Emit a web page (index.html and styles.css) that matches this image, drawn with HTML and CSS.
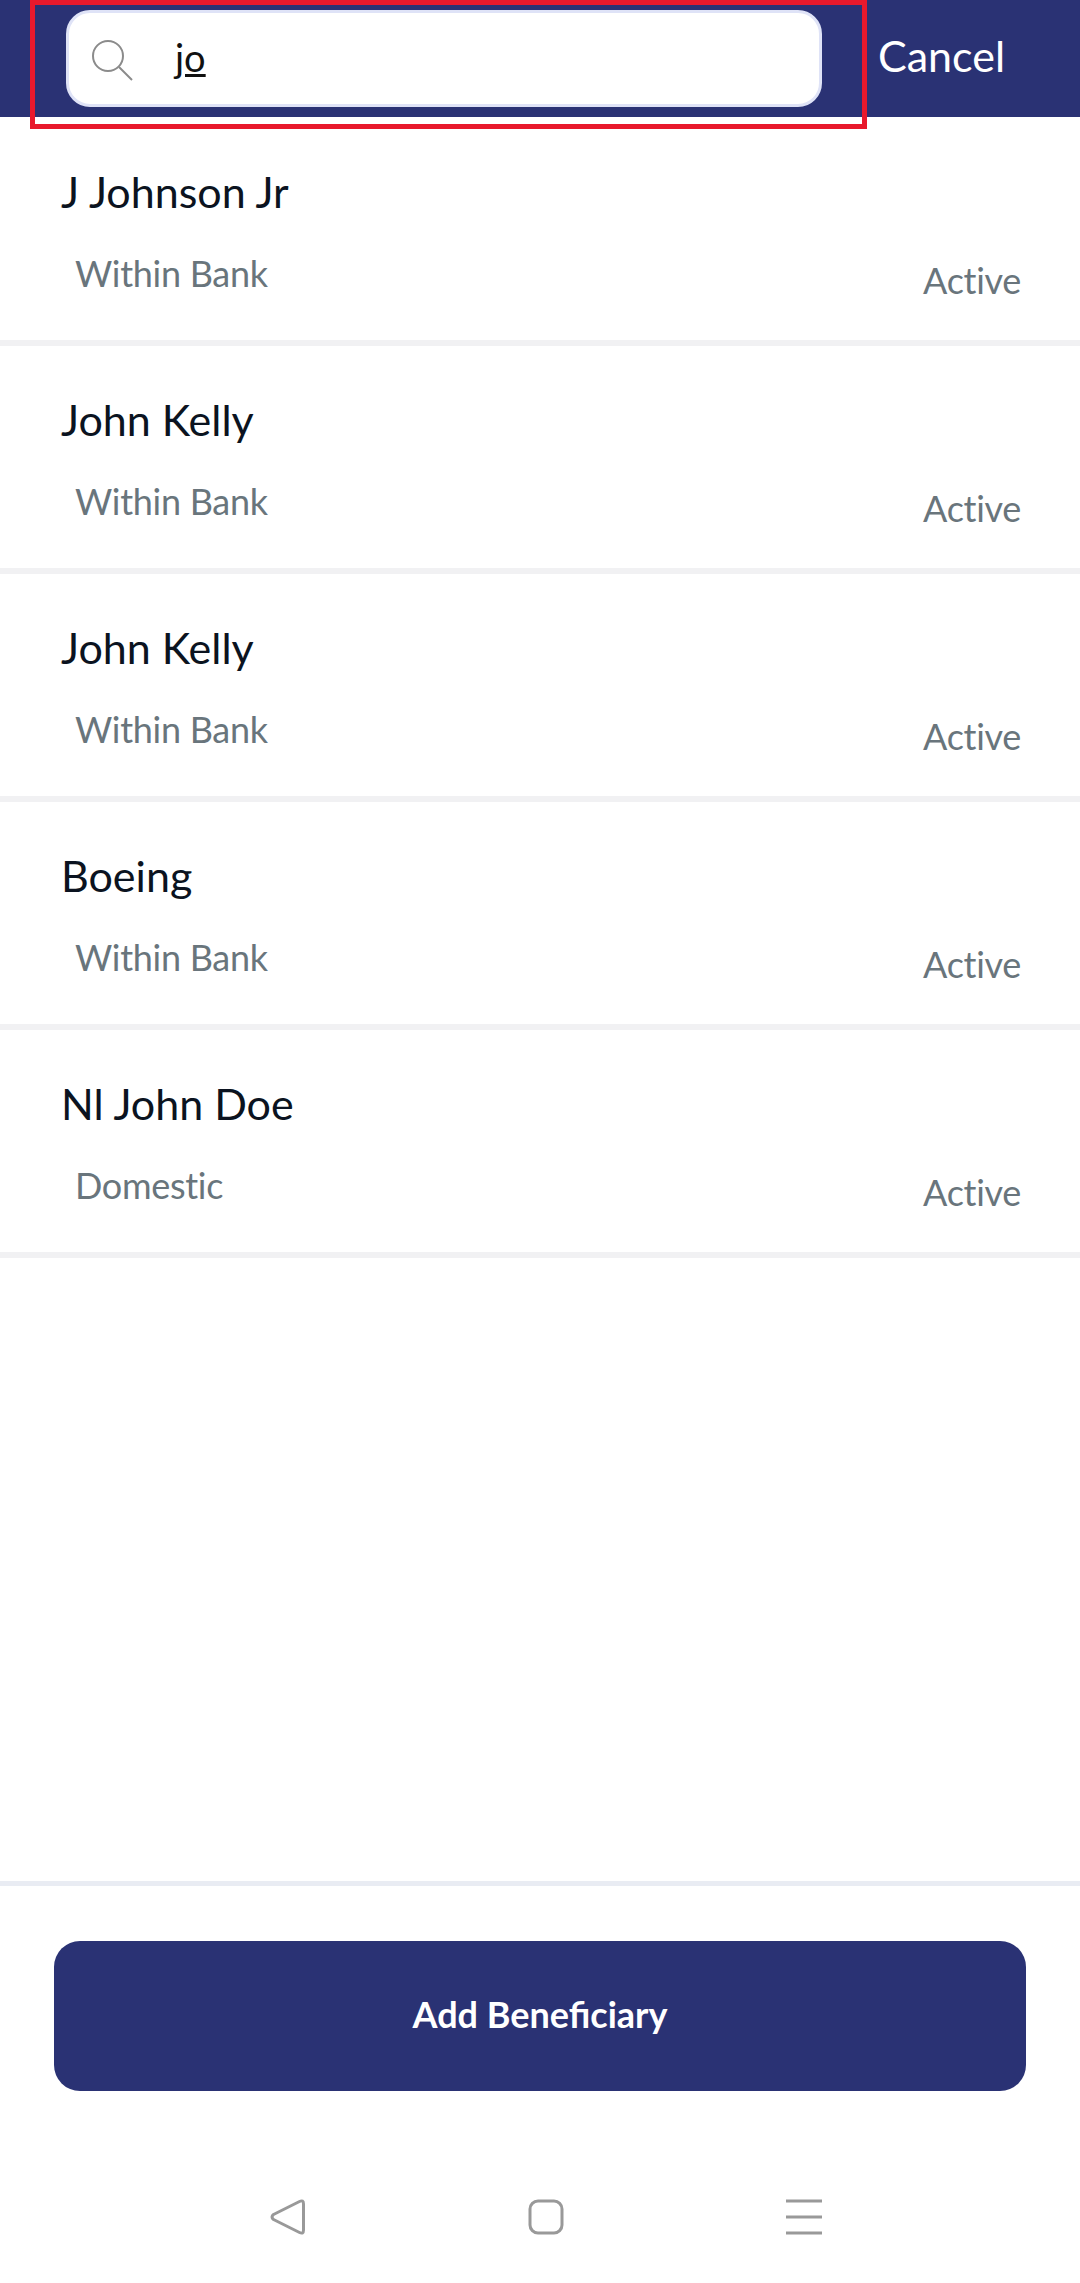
FILE: index.html
```html
<!DOCTYPE html>
<html lang="en">
<head>
    <meta charset="UTF-8">
    <meta name="viewport" content="width=device-width, initial-scale=1.0">
    <title>Beneficiaries</title>
    <link rel="stylesheet" href="styles.css">
</head>
<body>
    <div class="app">
        <header class="search-bar">
            <div class="search-highlight">
                <div class="search-box">
                    <svg class="search-icon" width="44" height="44" viewBox="0 0 44 44" fill="none" stroke="#8b8b8b" stroke-width="2">
                        <circle cx="17" cy="17" r="15"/>
                        <path d="M28 28 L41 41"/>
                    </svg>
                    <span class="search-text">jo</span>
                </div>
            </div>
            <span class="cancel">Cancel</span>
        </header>

        <div class="list">
            <div class="row">
                <div class="row-name">J Johnson Jr</div>
                <div class="row-info">
                    <span class="row-type">Within Bank</span>
                    <span class="row-status">Active</span>
                </div>
            </div>
            <div class="row">
                <div class="row-name">John Kelly</div>
                <div class="row-info">
                    <span class="row-type">Within Bank</span>
                    <span class="row-status">Active</span>
                </div>
            </div>
            <div class="row">
                <div class="row-name">John Kelly</div>
                <div class="row-info">
                    <span class="row-type">Within Bank</span>
                    <span class="row-status">Active</span>
                </div>
            </div>
            <div class="row">
                <div class="row-name">Boeing</div>
                <div class="row-info">
                    <span class="row-type">Within Bank</span>
                    <span class="row-status">Active</span>
                </div>
            </div>
            <div class="row">
                <div class="row-name">Nl John Doe</div>
                <div class="row-info">
                    <span class="row-type">Domestic</span>
                    <span class="row-status">Active</span>
                </div>
            </div>
        </div>

        <footer class="footer">
            <div class="add-btn">Add Beneficiary</div>
        </footer>

        <nav class="nav-bar">
            <svg width="36" height="36" viewBox="0 0 36 36" fill="none" stroke="#999" stroke-width="3" stroke-linejoin="round">
                <path d="M33.5 5 V31 Q33.5 35.5 29.5 33.5 L3.5 20.5 Q0.5 18 3.5 15.5 L29.5 2.5 Q33.5 0.5 33.5 5 Z"/>
            </svg>
            <svg width="36" height="36" viewBox="0 0 36 36" fill="none" stroke="#999" stroke-width="3">
                <rect x="2" y="2" width="32" height="32" rx="8"/>
            </svg>
            <svg width="36" height="36" viewBox="0 0 36 36" fill="none" stroke="#999" stroke-width="3">
                <path d="M0 2 H36 M0 18 H36 M0 34 H36"/>
            </svg>
        </nav>
    </div>
</body>
</html>
```

FILE: styles.css
```css
* {
    margin: 0;
    padding: 0;
    box-sizing: border-box;
}

body {
    font-family: Lato, "Noto Sans", sans-serif;
    background: #fff;
}

.app {
    width: 1080px;
    height: 2283px;
    display: flex;
    flex-direction: column;
    overflow: hidden;
}

.search-bar {
    height: 117px;
    background: #2a3274;
    display: flex;
    align-items: flex-start;
    padding-left: 30px;
    flex-shrink: 0;
}

.search-highlight {
    width: 837px;
    height: 129px;
    padding: 5px 40px 0 31px;
    border: 5px solid #e8192c;
    position: relative;
    flex-shrink: 0;
}

.search-box {
    height: 97px;
    background: #fff;
    border: 3px solid #dfe3f7;
    border-radius: 24px;
    display: flex;
    align-items: center;
    padding-left: 22px;
}

.search-icon {
    flex-shrink: 0;
    margin-top: 4px;
}

.search-text {
    margin-left: 40px;
    font-size: 38px;
    color: #111;
    text-decoration: underline;
    padding-bottom: 3px;
}

.cancel {
    margin-left: 11px;
    line-height: 112px;
    font-size: 43px;
    color: #fff;
}

.list {
    flex: 1;
    padding-top: 1px;
}

.row {
    height: 228px;
    border-bottom: 6px solid #f1f1f3;
    padding: 46px 59px 0 61px;
}

.row-name {
    font-size: 43px;
    line-height: 56px;
    color: #0b1320;
}

.row-info {
    display: flex;
    justify-content: space-between;
    margin-top: 28px;
    margin-left: 14px;
}

.row-type {
    font-size: 36px;
    line-height: 50px;
    letter-spacing: -0.3px;
    color: #69757c;
}

.row-status {
    font-size: 36px;
    line-height: 50px;
    letter-spacing: -0.3px;
    color: #69757c;
    padding-top: 7px;
}

.footer {
    height: 318px;
    border-top: 5px solid #e9ecf3;
    padding: 55px 54px 0;
    flex-shrink: 0;
}

.add-btn {
    height: 150px;
    background: #2a3274;
    border-radius: 26px;
    color: #fff;
    font-size: 36px;
    font-weight: 700;
    padding-bottom: 4px;
    display: flex;
    align-items: center;
    justify-content: center;
}

.nav-bar {
    height: 84px;
    padding: 0 258px 0 270px;
    display: flex;
    justify-content: space-between;
    flex-shrink: 0;
}
```
